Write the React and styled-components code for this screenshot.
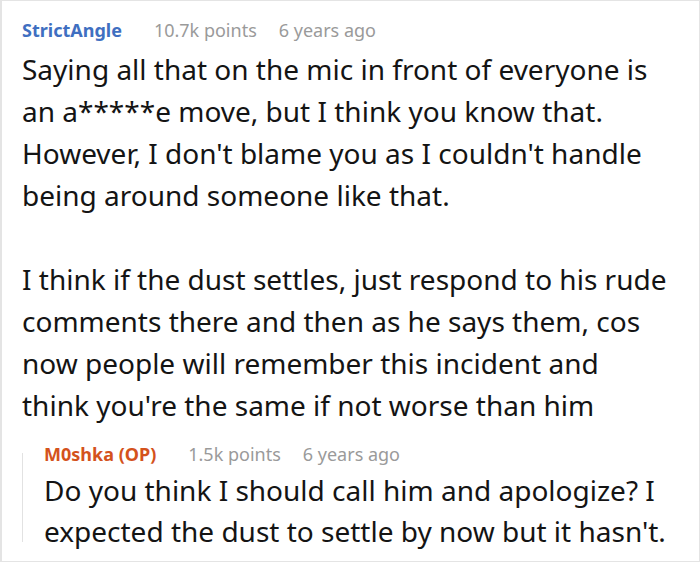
import React from 'react';
import styled, { createGlobalStyle } from 'styled-components';

const GlobalStyle = createGlobalStyle`
  html, body {
    margin: 0;
    padding: 0;
    background: #fff;
  }
  body {
    font-family: "Noto Sans", "Open Sans", sans-serif;
  }
`;

const Card = styled.div`
  box-sizing: border-box;
  width: 700px;
  height: 562px;
  border: 1px solid #e4e4e4;
  border-left-width: 2px;
  padding: 16px 28px 0 20px;
  overflow: hidden;
  background: #fff;
`;

const Comment = styled.div`
  display: flex;
  flex-direction: column;
`;

const Meta = styled.div`
  display: flex;
  align-items: baseline;
  font-size: 18px;
  line-height: 27px;
  margin-bottom: ${p => (p.$reply ? '2px' : '4px')};
`;

const Author = styled.span`
  font-weight: 700;
  color: ${p => (p.$op ? '#d4521c' : '#3f6fc1')};
  margin-right: 32px;
`;

const Info = styled.span`
  color: #9a9a9a;
  margin-right: 22px;
`;

const Body = styled.div`
  font-size: 28px;
  line-height: ${p => (p.$reply ? '41px' : '42px')};
  color: #141414;

  p {
    margin: 0 0 42px 0;
  }
  p:last-child {
    margin-bottom: 0;
  }
`;

const Replies = styled.div`
  position: relative;
  margin-top: 15px;
  padding-left: 22px;

  &::before {
    content: '';
    position: absolute;
    left: 0;
    top: 12px;
    bottom: 10px;
    width: 1px;
    background: #e2e2e2;
  }
`;

function CommentBlock({ author, op, reply, points, age, paragraphs, children }) {
  return (
    <Comment>
      <Meta $reply={reply}>
        <Author $op={op}>{author}</Author>
        <Info>{points}</Info>
        <Info>{age}</Info>
      </Meta>
      <Body $reply={reply}>
        {paragraphs.map((t, i) => (
          <p key={i}>{t}</p>
        ))}
      </Body>
      {children && <Replies>{children}</Replies>}
    </Comment>
  );
}

export default function App() {
  return (
    <>
      <GlobalStyle />
      <Card>
        <CommentBlock
          author="StrictAngle"
          points="10.7k points"
          age="6 years ago"
          paragraphs={[
            "Saying all that on the mic in front of everyone is an a*****e move, but I think you know that. However, I don't blame you as I couldn't handle being around someone like that.",
            "I think if the dust settles, just respond to his rude comments there and then as he says them, cos now people will remember this incident and think you're the same if not worse than him",
          ]}
        >
          <CommentBlock
            author="M0shka (OP)"
            op
            reply
            points="1.5k points"
            age="6 years ago"
            paragraphs={[
              "Do you think I should call him and apologize? I expected the dust to settle by now but it hasn't.",
            ]}
          />
        </CommentBlock>
      </Card>
    </>
  );
}
